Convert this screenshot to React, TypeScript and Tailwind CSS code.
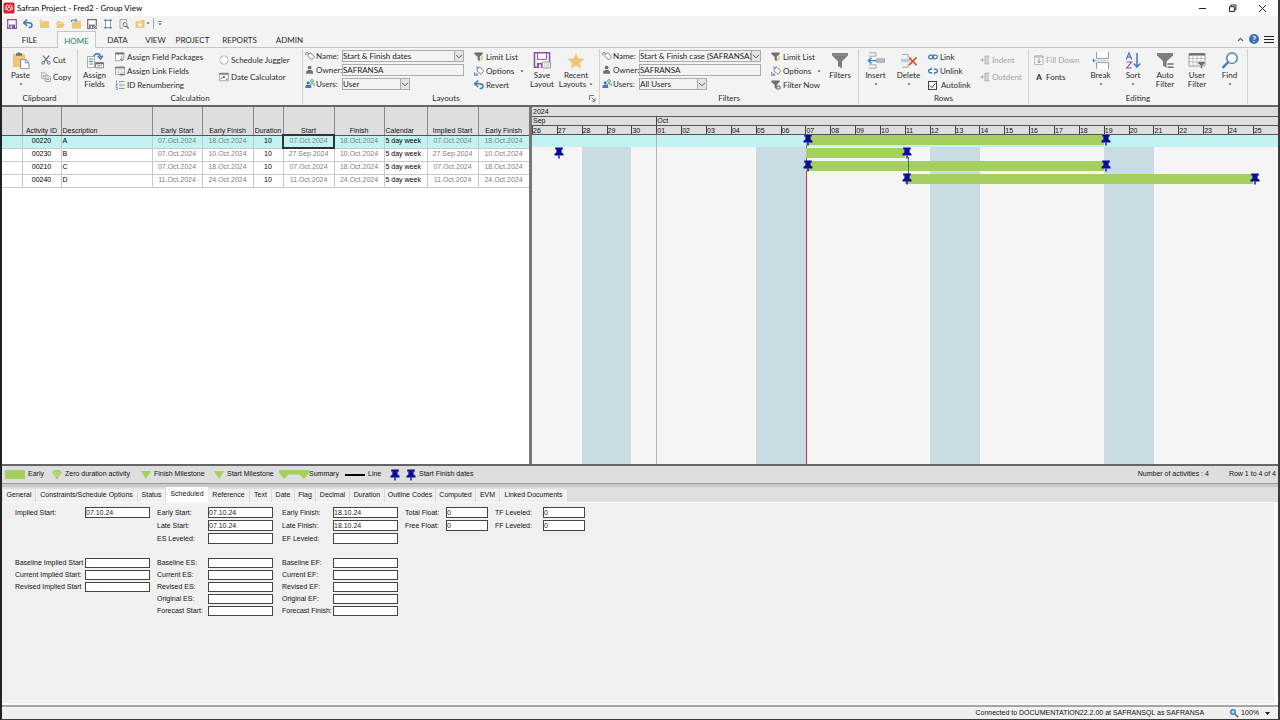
import { useState, type ReactNode } from "react";

/* ---------- Colours used by the icons ---------- */
const GRAY = "#6f6f6f";
const BLUE = "#3e7cb8";
const GOLD = "#edc677";
const PURPLE = "#8a4fa8";

/* ---------- Icon shells ---------- */
function Small({ children }: { children: ReactNode }) {
  return (
    <svg viewBox="0 0 10 10" className="h-[10px] w-[10px] shrink-0" fill="none" aria-hidden="true">
      {children}
    </svg>
  );
}

function Big({ children }: { children: ReactNode }) {
  return (
    <svg viewBox="0 0 18 17" className="h-[17px] w-[18px] shrink-0" fill="none" aria-hidden="true">
      {children}
    </svg>
  );
}

function Caret() {
  return (
    <svg viewBox="0 0 4 3" className="h-[3px] w-[4px] shrink-0" aria-hidden="true">
      <path d="M0.5 0.5h3L2 2.3z" fill="#444" />
    </svg>
  );
}

function Chevron() {
  return (
    <svg viewBox="0 0 8 5" className="h-[5px] w-[8px]" fill="none" aria-hidden="true">
      <path d="M1 0.8l3 3 3-3" stroke="#555" />
    </svg>
  );
}

/* ---------- Small icons ---------- */
const floppy = (c: string) => (
  <>
    <path d="M0.7 0.7h8.6v8.6H0.7z" stroke={c} strokeWidth="1.2" fill="#fff" />
    <path d="M2 5.6h6v3.7H2z" fill={c} />
    <path d="M3.6 6.8h1.4v2.4H3.6z" fill="#fff" />
  </>
);

const icons = {
  save: <Small>{floppy(PURPLE)}</Small>,
  saveAs: (
    <Small>
      {floppy(GRAY)}
      <path d="M6.4 9.6l3.2-3.2" stroke="#f3f3f3" strokeWidth="2.4" />
      <path d="M6.4 9.6l3.2-3.2" stroke={BLUE} strokeWidth="1.2" />
    </Small>
  ),
  undo: (
    <Small>
      <path d="M1.2 3.8h4.6c2 0 3.2 1 3.2 2.4S7.8 8.6 5.6 8.6" stroke={BLUE} strokeWidth="1.5" />
      <path d="M4.2 0.6L0.6 3.8l3.6 3.2" stroke={BLUE} strokeWidth="1.5" />
    </Small>
  ),
  folder: (
    <Small>
      <path d="M1 3.2h3.2l1-1.2H10v7H1z" fill={GOLD} />
      <path d="M2 0v4M0 2h4" stroke={GOLD} />
    </Small>
  ),
  folderOpen: (
    <Small>
      <path d="M2 2.2h3l1 1h3v1.3H3L1 8.2z" fill={GOLD} />
      <path d="M3.2 5h6.6L8 9H1z" fill={GOLD} />
    </Small>
  ),
  folderUp: (
    <Small>
      <path d="M1 3h3.2l1-1.2H10V9.5H1z" fill={GOLD} />
      <path d="M0.5 3V1.2h4.6M4 0l1.6 1.2L4 2.6" stroke={BLUE} />
    </Small>
  ),
  layout: (
    <Small>
      <path d="M2.5 0v10M7.5 0v10" stroke={GRAY} strokeWidth="0.7" />
      <path d="M1 1.3h8M1 8.7h8" stroke={BLUE} />
      <path d="M3 2h4v6H3z" fill="#fff" />
    </Small>
  ),
  preview: (
    <Small>
      <path d="M7.5 2.8V0.6H1v8.8h3" stroke="#909090" strokeWidth="0.8" />
      <circle cx="6" cy="5.6" r="2" stroke={GRAY} />
      <path d="M7.4 7L9.6 9.6" stroke={GRAY} strokeWidth="1.3" />
    </Small>
  ),
  starFolder: (
    <Small>
      <path d="M0.5 2.2h5L6.5 1H9.5v8H0.5z" fill={GOLD} />
      <path d="M5 3l.8 1.7 1.8.2-1.4 1.2.4 1.8L5 7l-1.6.9.4-1.8L2.4 4.9l1.8-.2z" fill="#fff" />
    </Small>
  ),
  cut: (
    <Small>
      <path d="M2 0.5l4.8 6.2M8.2 0.5L3.2 6.7" stroke={GRAY} strokeWidth="1.2" />
      <circle cx="2.2" cy="7.8" r="1.4" stroke={BLUE} />
      <circle cx="7.8" cy="7.8" r="1.4" stroke={BLUE} />
    </Small>
  ),
  copy: (
    <Small>
      <path d="M0.6 0.6h3l1.6 1.6v4.4H0.6z" fill="#fff" stroke="#999" strokeWidth="0.8" />
      <path d="M4.2 3.4h3.2l2 1.8v4.2H4.2z" fill="#fff" stroke="#888" strokeWidth="0.8" />
      <path d="M5.3 6h2.8M5.3 7.6h2.8M1.6 3h2M1.6 4.6h2" stroke={BLUE} strokeWidth="0.8" />
    </Small>
  ),
  packages: (
    <Small>
      <path d="M0.6 0.8h8.3v6M0.6 0.8v8h5" stroke="#8c8c8c" strokeWidth="0.8" fill="#fff" />
      <path d="M0.6 1.6h8.3" stroke={GRAY} strokeWidth="1.8" />
      <path d="M6.8 4.5v3.8M5 7l1.8 2L8.6 7" stroke="#4f9d6b" />
    </Small>
  ),
  linkFields: (
    <Small>
      <path d="M0.5 1h9v7.4h-9z" stroke="#8c8c8c" strokeWidth="0.8" fill="#fff" />
      <path d="M0.5 1.6h9" stroke={GRAY} strokeWidth="1.5" />
      <path d="M3.5 1v7.4M6.5 1v7.4M0.5 4h9M0.5 6.2h9" stroke="#b5b5b5" strokeWidth="0.5" />
      <path d="M4.5 8.6h5" stroke={BLUE} strokeWidth="1.6" />
    </Small>
  ),
  renumber: (
    <Small>
      <path d="M1.5 0.5v2.2M0.7 4h1.6L0.9 6h1.5M0.8 7.5h1.5v2H0.8" stroke={BLUE} strokeWidth="0.8" />
      <path d="M3.8 1.6h5.7M3.8 5h5.7M3.8 8.4h5.7" stroke="#8f8f8f" />
    </Small>
  ),
  juggler: (
    <Small>
      <circle cx="5" cy="5" r="4.2" stroke="#7fa9cc" strokeWidth="0.9" strokeDasharray="5.6 1" fill="#fff" />
    </Small>
  ),
  dateCalc: (
    <Small>
      <path d="M0.6 1.2h8.8v7.6H0.6z" stroke="#8c8c8c" strokeWidth="0.8" fill="#fff" />
      <path d="M0.6 2h8.8" stroke={GRAY} strokeWidth="1.4" />
      <path d="M3.8 4h2v2h-2z" fill="#cf3b2c" />
      <path d="M1.8 5.6h1.4v1.4H1.8zM7 6.6h1.4V8H7z" fill="#4f9d6b" />
    </Small>
  ),
  tag: (
    <Small>
      <path d="M3 2.6l3-.6 3.4 3.8-2.6 3-3.8-3.4z" stroke="#777" strokeWidth="0.9" fill="#fff" />
      <path d="M0.8 4.2V2.2L2.2 1.2l1.6 1.6" stroke={GRAY} strokeWidth="0.9" />
    </Small>
  ),
  owner: (
    <Small>
      <circle cx="4.6" cy="2.6" r="1.9" fill={GRAY} />
      <path d="M1.2 8.8V6.2l2-1.2h2.8l2 1.2v2.6z" fill={GRAY} />
    </Small>
  ),
  users: (
    <Small>
      <circle cx="7" cy="2" r="1.4" stroke="#4f9d6b" strokeWidth="0.9" />
      <path d="M5.6 6.6V4.8h3.6v2.4" stroke="#4f9d6b" strokeWidth="0.9" />
      <circle cx="3.2" cy="3.8" r="1.6" fill={BLUE} />
      <path d="M0.4 9V6.8l1.6-1h2.6l1.6 1V9z" fill={BLUE} />
    </Small>
  ),
  limit: (
    <Small>
      <path d="M0.3 0.5h8.4v1.4L5.8 4.8v4.4L3.6 7.8v-3L0.3 1.9z" fill={GRAY} />
      <path d="M8.4 4L5.6 7.2h1.6L6.2 10l3.4-3.6H8L9.4 4z" fill={GOLD} />
    </Small>
  ),
  filterNow: (
    <Small>
      <path d="M0.3 0.5h8.4v1.4L5.8 4.8v4.4L3.6 7.8v-3L0.3 1.9z" fill={GRAY} />
      <circle cx="7.4" cy="7.6" r="1.7" fill="#f3f3f3" stroke={GRAY} strokeWidth="1.1" />
    </Small>
  ),
  options: (
    <Small>
      <path d="M3.2 1.6l2.8-.6 3.6 4-2.6 3.4-4-3.6z" stroke="#777" strokeWidth="0.9" fill="#fff" />
      <path d="M2.2 0.5l2.6 2.4" stroke={GRAY} strokeWidth="0.9" />
      <path d="M0.8 6v3M3 7v2M0 9.2h4.2" stroke={BLUE} strokeWidth="0.9" />
    </Small>
  ),
  link: (
    <Small>
      <rect x="0.7" y="3.2" width="4.8" height="3.6" rx="1.8" stroke={BLUE} strokeWidth="1.3" />
      <rect x="4.5" y="3.2" width="4.8" height="3.6" rx="1.8" stroke={BLUE} strokeWidth="1.3" />
    </Small>
  ),
  unlink: (
    <Small>
      <path d="M4 3.2H2.4a1.8 1.8 0 000 3.6H4M6 3.2h1.6a1.8 1.8 0 010 3.6H6" stroke={BLUE} strokeWidth="1.4" />
      <path d="M3.4 1.2l.8 1M6.6 8.8l-.8-1" stroke={BLUE} strokeWidth="0.9" />
    </Small>
  ),
  indent: (
    <Small>
      <path d="M0 5h4M2.4 3.2v3.6M4.8 1.2h4.8M5 1.2v7.6M5 5h4M4.8 8.8h4.8M6 3h3M6 7h3" stroke="#a5a5a5" strokeWidth="0.9" />
    </Small>
  ),
  fillDown: (
    <Small>
      <path d="M0.8 0.8h8.2v8.6H0.8z" stroke="#aaa" strokeWidth="0.9" fill="#fff" />
      <path d="M0.8 2h8.2" stroke="#aaa" strokeWidth="1.2" />
      <path d="M5 3.4v4.4M3.2 6L5 7.8 6.8 6" stroke="#8a8a8a" />
    </Small>
  ),
};

/* ---------- Large ribbon icons ---------- */
const bigIcons = {
  paste: (
    <Big>
      <path d="M1 2h12v13H1z" fill={GOLD} />
      <path d="M4 2.5V1.2h1.6L7 0l1.4 1.2H10v2.6H4z" fill={GRAY} />
      <path d="M8.5 7.5h5l3.5 3.2v6H8.5z" fill="#fff" stroke="#8c8c8c" />
      <path d="M13.3 7.5v3.3H17" stroke="#8c8c8c" />
    </Big>
  ),
  assign: (
    <Big>
      <path d="M1.5 4.5h7v11h-7z" fill="#fff" stroke="#a0a0a0" strokeWidth="0.9" />
      <path d="M3 7h4M3 9.5h4M3 12h4" stroke={BLUE} />
      <path d="M9.5 10.5h8v5.3h-8z" fill="#fff" stroke="#8c8c8c" />
      <path d="M9.5 11.5h8" stroke={GRAY} strokeWidth="1.6" />
      <path d="M11 13.8h5" stroke="#999" />
      <path d="M8 4.2C9 0.8 14 0.6 14.6 5M11.8 4l2.8 3 2.4-3.4" stroke={BLUE} strokeWidth="1.5" />
    </Big>
  ),
  saveLayout: (
    <Big>
      <path d="M1.5 0.8h15v14.4h-15z" fill="#fff" stroke={PURPLE} strokeWidth="1.6" />
      <path d="M4.5 1h9v6.4h-9z" fill="#fff" stroke={PURPLE} />
      <path d="M4 11h8v4.6H4z" fill={PURPLE} />
      <path d="M6 12.4h2v3H6z" fill="#fff" />
      <path d="M9.5 10h8v6h-8z" fill="#fff" stroke="#999" />
      <path d="M11 12h1.4M13.2 12h3M11 14h1.4M13.2 14h3" stroke="#999" strokeWidth="0.8" />
    </Big>
  ),
  star: (
    <Big>
      <path d="M9 0.8l2.3 5.5 6 .5-4.5 3.9 1.4 5.8L9 13.4l-5.2 3.1 1.4-5.8L.7 6.8l6-.5z" fill={GOLD} />
    </Big>
  ),
  filter: (
    <Big>
      <path d="M1 1h16v2.4l-6 5.8v7.3l-4-2.4V9.2L1 3.4z" fill="#7d7d7d" />
      <path d="M1.8 3h14.4" stroke="#a5a5a5" strokeWidth="0.6" />
    </Big>
  ),
  insert: (
    <Big>
      <path d="M2 0.8h7v3.4H2M2 12.8h7v3.4H2" stroke="#a8a8a8" />
      <path d="M9.5 6.8h8v3.6h-8z" fill="#a8c4dd" stroke="#9a9a9a" strokeWidth="0.7" />
      <path d="M1.6 8.6h7.4M4.4 5.8L1.4 8.6l3 2.8" stroke={BLUE} strokeWidth="1.4" />
    </Big>
  ),
  remove: (
    <Big>
      <path d="M2 2.4h6v3M2 15.2h6v-3" stroke="#a8a8a8" />
      <path d="M1 6.8h9v3.6H1z" fill="#b7cfe4" />
      <path d="M9 5.4l7.6 7.8M16.6 5.4L9 13.2" stroke="#d9532c" strokeWidth="1.7" />
    </Big>
  ),
  pageBreak: (
    <Big>
      <path d="M4.5 0v6.4h12V0M4.5 17v-6.4h12V17" fill="#fff" stroke="#999" />
      <path d="M2.8 8.5h14" stroke="#a8c4dd" strokeWidth="0.8" />
      <path d="M0.8 6.4l2.8 2.1-2.8 2.1z" fill={BLUE} />
    </Big>
  ),
  sort: (
    <Big>
      <path d="M2.2 7.4L5 0.8l2.8 6.6M3.2 5.2h3.6" stroke={BLUE} strokeWidth="1.2" />
      <path d="M2.6 10h5L2.8 16h5" stroke={PURPLE} strokeWidth="1.2" />
      <path d="M13 1v14M9.8 11.6l3.2 3.6 3.2-3.6" stroke={BLUE} strokeWidth="1.5" />
    </Big>
  ),
  autoFilter: (
    <Big>
      <path d="M1 1h16v2.4l-6 5.6v7l-4-2.2V9L1 3.4z" fill="#7d7d7d" />
      <path d="M10.5 9.5H18V17h-7.5z" fill="#f3f3f3" />
      <path d="M11.5 12h6M11.5 15.2h6" stroke={GRAY} strokeWidth="1.6" />
    </Big>
  ),
  userFilter: (
    <Big>
      <path d="M1 1.5h16v12.5H1z" fill="#fff" stroke="#9a9a9a" />
      <path d="M1 2.4h16" stroke={GRAY} strokeWidth="2.4" />
      <path d="M5 3v11M9 3v11M13 3v11M1 6.5h16M1 10h16" stroke="#b0b0b0" strokeWidth="0.8" />
      <path d="M9.5 9.5h8v1.4l-2.8 2.6V17l-2.4-1.2v-2.3l-2.8-2.6z" fill={GRAY} stroke="#f3f3f3" strokeWidth="0.6" />
    </Big>
  ),
  find: (
    <Big>
      <circle cx="11" cy="6.2" r="5.2" fill="#fff" stroke={BLUE} strokeWidth="1.4" />
      <path d="M7.2 10L1.6 15.8" stroke={BLUE} strokeWidth="2.4" />
    </Big>
  ),
};

function Pin() {
  return (
    <svg viewBox="0 0 10 12" className="h-[12px] w-[10px] shrink-0" aria-hidden="true">
      <path d="M1.2 0.6h7.6v1.8H7.6v3.1l1.9 1.3v1.8H0.5V6.8l1.9-1.3V2.4H1.2z" fill="#0b0b9c" />
      <path d="M4.3 8.4h1.4V11.6H4.3z" fill="#0b0b9c" />
    </svg>
  );
}

/* ---------- Ribbon building blocks ---------- */
function Group({ label, width, children, launcher }: { label: string; width: string; children: ReactNode; launcher?: boolean }) {
  return (
    <section className={`flex shrink-0 flex-col border-r border-[#d2d2d2] ${width}`} aria-label={label}>
      <div className="flex h-[44px] items-start">{children}</div>
      <div className="flex h-[11px] items-center">
        <span className="flex-1 text-center leading-[11px]">{label}</span>
        {launcher && (
          <button aria-label="More layout settings" className="mr-[3px]">
            <svg viewBox="0 0 7 7" className="h-[7px] w-[7px]" fill="none">
              <path d="M0.5 5V0.5H5" stroke="#777" />
              <path d="M2.6 2.6l3 3M6 3v3.2H2.8" stroke="#777" />
            </svg>
          </button>
        )}
      </div>
    </section>
  );
}

function BigButton({ icon, lines, width, caret }: { icon: ReactNode; lines: string[]; width: string; caret?: boolean }) {
  return (
    <button className={`flex shrink-0 flex-col items-center pt-[3px] ${width}`}>
      {icon}
      <span className="mt-[2px] leading-[9px]">{lines[0]}</span>
      {lines[1] && (
        <span className="flex items-center gap-[3px] leading-[9px] whitespace-nowrap">
          {lines[1]}
          {caret && <Caret />}
        </span>
      )}
      {!lines[1] && caret && (
        <span className="pt-[3px]">
          <Caret />
        </span>
      )}
    </button>
  );
}

function Item({ icon, text, disabled, caret }: { icon: ReactNode; text: string; disabled?: boolean; caret?: boolean }) {
  return (
    <button disabled={disabled} className="flex h-[14px] items-center gap-[2px] whitespace-nowrap disabled:text-[#a3a3a3]">
      {icon}
      <span>{text}</span>
      {caret && (
        <span className="pl-[4px]">
          <Caret />
        </span>
      )}
    </button>
  );
}

function Combo({ id, value, width }: { id: string; value: string; width: string }) {
  return (
    <div className={`relative h-[12px] ${width}`}>
      <select id={id} className="block h-full w-full appearance-none border border-[#ababab] bg-[#f3f3f3] text-[8px] leading-[9px] text-[#222]">
        <option>{value}</option>
      </select>
      <span className="pointer-events-none absolute inset-y-0 right-0 flex w-[10px] items-center justify-center border border-[#ababab] bg-[#e4e4e4]">
        <Chevron />
      </span>
    </div>
  );
}

function NameOwnerUsers({ prefix, name, users, usersWidth }: { prefix: string; name: string; users: string; usersWidth: string }) {
  return (
    <div className="flex shrink-0 flex-col pl-[2px]">
      <div className="flex h-[14px] items-center">
        {icons.tag}
        <label htmlFor={`${prefix}-name`} className="w-[27px] pl-[1px]">Name:</label>
        <Combo id={`${prefix}-name`} value={name} width="w-[122px]" />
      </div>
      <div className="flex h-[14px] items-center">
        {icons.owner}
        <label htmlFor={`${prefix}-owner`} className="w-[27px] pl-[1px]">Owner:</label>
        <input id={`${prefix}-owner`} defaultValue="SAFRANSA" className="h-[12px] w-[122px] border border-[#ababab] bg-[#f3f3f3] text-[#222]" />
      </div>
      <div className="flex h-[14px] items-center">
        {icons.users}
        <label htmlFor={`${prefix}-users`} className="w-[27px] pl-[1px]">Users:</label>
        <Combo id={`${prefix}-users`} value={users} width={usersWidth} />
      </div>
    </div>
  );
}

/* ---------- Title bar and tabs ---------- */
function TitleBar() {
  return (
    <header className="flex h-[16px] shrink-0 items-center bg-white pl-[1px] text-[8px] text-black">
      <svg viewBox="0 0 12 12" className="h-[12px] w-[12px]" fill="none" aria-hidden="true">
        <rect x="0.5" y="0.5" width="11" height="11" rx="1.5" fill="#d8202f" />
        <path d="M3 5.4V3.8L4.6 3l1.4.8L7.4 3l1.6.8v1.6L7.6 6.2 6 5.4l-1.6.8zM4.4 6.2v1.6L6 8.9l1.6-1.1V6.2M6 3.8v1.6M3 5.4l-.6 1.8 2 .6M9 5.4l.6 1.8-2 .6" stroke="#fff" strokeWidth="0.8" />
      </svg>
      <h1 className="pl-[2px]">Safran Project - Fred2 - Group View</h1>
      <div className="ml-auto flex items-center gap-[21px] pr-[11px]">
        <button aria-label="Minimize" className="h-[9px] w-[9px]">
          <svg viewBox="0 0 9 9" fill="none"><path d="M1 4.5h7" stroke="#222" /></svg>
        </button>
        <button aria-label="Restore" className="h-[9px] w-[9px]">
          <svg viewBox="0 0 9 9" fill="none"><path d="M1.5 2.7h4.8v4.8H1.5zM3 2.5V1h4.9v4.9H6.5" stroke="#222" /></svg>
        </button>
        <button aria-label="Close" className="h-[9px] w-[9px]">
          <svg viewBox="0 0 9 9" fill="none"><path d="M1 1l7 7M8 1L1 8" stroke="#222" /></svg>
        </button>
      </div>
    </header>
  );
}

const quickTools: [string, ReactNode][] = [
  ["Save", icons.save],
  ["Undo", icons.undo],
  ["New", icons.folder],
  ["Open", icons.folderOpen],
  ["Reopen", icons.folderUp],
  ["Save as", icons.saveAs],
  ["Page layout", icons.layout],
  ["Preview", icons.preview],
  ["Favorites", icons.starFolder],
];

function QuickAccess() {
  return (
    <div className="flex h-[15px] shrink-0 items-center gap-[6px] pl-[5px]">
      {quickTools.map(([name, icon]) => (
        <button key={name} aria-label={name}>{icon}</button>
      ))}
      <span className="-ml-[5px]"><Caret /></span>
      <span className="-ml-[3px] h-[11px] w-px bg-[#aaa]" />
      <button aria-label="Customize toolbar" className="-ml-[2px] border-t border-[#888] pt-[1px]"><Caret /></button>
    </div>
  );
}

const ribbonTabs: [string, string][] = [
  ["FILE", "w-[55px]"],
  ["HOME", "w-[39px]"],
  ["DATA", "w-[43px]"],
  ["VIEW", "w-[33px]"],
  ["PROJECT", "w-[41px]"],
  ["REPORTS", "w-[53px]"],
  ["ADMIN", "w-[47px]"],
];

function RibbonTabs() {
  return (
    <nav className="flex h-[17px] shrink-0 text-[8px]">
      {ribbonTabs.map(([name, width]) => (
        <button
          key={name}
          className={
            name === "HOME"
              ? `${width} border border-b-0 border-[#c6c6c6] bg-[#f7f7f7] pt-[1px] text-[#2c7d57]`
              : `${width} border-b border-[#c6c6c6] pt-[2px]`
          }
        >
          {name}
        </button>
      ))}
      <div className="flex flex-1 items-center justify-end gap-[5px] border-b border-[#c6c6c6] pr-[4px]">
        <button aria-label="Collapse ribbon">
          <svg viewBox="0 0 7 5" className="h-[5px] w-[7px]" fill="none"><path d="M1 4l2.5-2.6L6 4" stroke="#666" strokeWidth="1.2" /></svg>
        </button>
        <button aria-label="Help" className="h-[10px] w-[10px] rounded-full bg-[#3a70b0] text-[8px] leading-[10px] font-bold text-white">?</button>
        <button aria-label="Menu" className="flex w-[10px] flex-col gap-[2px]">
          <span className="h-px bg-[#222]" />
          <span className="h-px bg-[#222]" />
          <span className="h-px bg-[#222]" />
        </button>
      </div>
    </nav>
  );
}

function Ribbon() {
  return (
    <div className="flex h-[57px] shrink-0 bg-[#f3f3f3] py-[1px] text-[8px]">
      <Group label="Clipboard" width="w-[76px]">
        <BigButton icon={bigIcons.paste} lines={["Paste"]} width="w-[37px]" caret />
        <div className="flex flex-col gap-[3px] pt-[4px] pl-[2px]">
          <Item icon={icons.cut} text="Cut" />
          <Item icon={icons.copy} text="Copy" />
        </div>
      </Group>

      <Group label="Calculation" width="w-[225px]">
        <BigButton icon={bigIcons.assign} lines={["Assign", "Fields"]} width="w-[33px]" />
        <div className="flex w-[108px] flex-col pt-[1px] pl-[4px]">
          <Item icon={icons.packages} text="Assign Field Packages" />
          <Item icon={icons.linkFields} text="Assign Link Fields" />
          <Item icon={icons.renumber} text="ID Renumbering" />
        </div>
        <div className="flex flex-col gap-[3px] pt-[4px]">
          <Item icon={icons.juggler} text="Schedule Juggler" />
          <Item icon={icons.dateCalc} text="Date Calculator" />
        </div>
      </Group>

      <Group label="Layouts" width="w-[297px]" launcher>
        <NameOwnerUsers prefix="layout" name="Start & Finish dates" users="User" usersWidth="w-[68px]" />
        <div className="flex w-[62px] flex-col pt-[1px] pl-[10px]">
          <Item icon={icons.limit} text="Limit List" />
          <Item icon={icons.options} text="Options" caret />
          <Item icon={icons.undo} text="Revert" />
        </div>
        <BigButton icon={bigIcons.saveLayout} lines={["Save", "Layout"]} width="w-[32px]" />
        <BigButton icon={bigIcons.star} lines={["Recent", "Layouts"]} width="w-[36px]" caret />
      </Group>

      <Group label="Filters" width="w-[259px]">
        <NameOwnerUsers prefix="filter" name="Start & Finish case (SAFRANSA)" users="All Users" usersWidth="w-[68px]" />
        <div className="flex w-[62px] flex-col pt-[1px] pl-[10px]">
          <Item icon={icons.limit} text="Limit List" />
          <Item icon={icons.options} text="Options" caret />
          <Item icon={icons.filterNow} text="Filter Now" />
        </div>
        <BigButton icon={bigIcons.filter} lines={["Filters"]} width="w-[36px]" />
      </Group>

      <Group label="Rows" width="w-[170px]">
        <BigButton icon={bigIcons.insert} lines={["Insert"]} width="w-[33px]" caret />
        <BigButton icon={bigIcons.remove} lines={["Delete"]} width="w-[33px]" caret />
        <div className="flex w-[55px] flex-col pt-[1px] pl-[3px]">
          <Item icon={icons.link} text="Link" />
          <Item icon={icons.unlink} text="Unlink" />
          <label className="flex h-[14px] items-center gap-[4px]">
            <input
              type="checkbox"
              defaultChecked
              className="peer h-[9px] w-[9px] appearance-none border border-[#444] bg-white"
            />
            <svg viewBox="0 0 9 9" className="-ml-[13px] hidden h-[9px] w-[9px] peer-checked:block" fill="none">
              <path d="M2 4.5l2 2 3.2-4" stroke="#333" />
            </svg>
            <span>Autolink</span>
          </label>
        </div>
        <div className="flex flex-col gap-[3px] pt-[4px]">
          <Item icon={icons.indent} text="Indent" disabled />
          <Item icon={icons.indent} text="Outdent" disabled />
        </div>
      </Group>

      <Group label="Editing" width="w-[219px]">
        <div className="flex w-[55px] flex-col gap-[3px] pt-[4px] pl-[5px]">
          <Item icon={icons.fillDown} text="Fill Down" disabled />
          <Item icon={<span className="w-[10px] text-center font-bold">A</span>} text="Fonts" />
        </div>
        <BigButton icon={bigIcons.pageBreak} lines={["Break"]} width="w-[33px]" caret />
        <BigButton icon={bigIcons.sort} lines={["Sort"]} width="w-[32px]" caret />
        <BigButton icon={bigIcons.autoFilter} lines={["Auto", "Filter"]} width="w-[32px]" />
        <BigButton icon={bigIcons.userFilter} lines={["User", "Filter"]} width="w-[32px]" />
        <BigButton icon={bigIcons.find} lines={["Find"]} width="w-[33px]" caret />
      </Group>
    </div>
  );
}

/* ---------- Activity table ---------- */
const columns = [
  { title: "", width: "w-[20px]", align: "text-center" },
  { title: "Activity ID", width: "w-[39px]", align: "text-center" },
  { title: "Description", width: "w-[91px]", align: "text-left" },
  { title: "Early Start", width: "w-[50px]", align: "text-center" },
  { title: "Early Finish", width: "w-[51px]", align: "text-center" },
  { title: "Duration", width: "w-[30px]", align: "text-center" },
  { title: "Start", width: "w-[51px]", align: "text-center" },
  { title: "Finish", width: "w-[50px]", align: "text-center" },
  { title: "Calendar", width: "w-[43px]", align: "text-left" },
  { title: "Implied Start", width: "w-[51px]", align: "text-center" },
  { title: "Early Finish", width: "w-[51px]", align: "text-center" },
];

const rows = [
  ["", "00220", "A", "07.Oct.2024", "18.Oct.2024", "10", "07.Oct.2024", "18.Oct.2024", "5 day week", "07.Oct.2024", "18.Oct.2024"],
  ["", "00230", "B", "07.Oct.2024", "10.Oct.2024", "10", "27.Sep.2024", "10.Oct.2024", "5 day week", "27.Sep.2024", "10.Oct.2024"],
  ["", "00210", "C", "07.Oct.2024", "18.Oct.2024", "10", "07.Oct.2024", "18.Oct.2024", "5 day week", "07.Oct.2024", "18.Oct.2024"],
  ["", "00240", "D", "11.Oct.2024", "24.Oct.2024", "10", "11.Oct.2024", "24.Oct.2024", "5 day week", "11.Oct.2024", "24.Oct.2024"],
];

function ActivityTable() {
  const [selected, setSelected] = useState(0);
  return (
    <div className="w-[527px] shrink-0 bg-white">
      <table className="w-full table-fixed border-collapse">
        <thead>
          <tr className="h-[28px] bg-[#dedede]">
            {columns.map((c, i) => (
              <th key={i} className={`border-r border-b border-[#8a8a8a] border-b-[#555] px-[1px] align-bottom leading-[8px] font-normal whitespace-nowrap ${c.width} ${c.align}`}>
                {c.title}
              </th>
            ))}
          </tr>
        </thead>
        <tbody>
          {rows.map((row, r) => (
            <tr key={row[1]} onClick={() => setSelected(r)} className={r === selected ? "h-[13px] bg-[#c3f2f2]" : "h-[13px]"}>
              {row.map((cell, i) => (
                <td
                  key={i}
                  className={`border-r border-b border-[#c9c9c9] px-[1px] align-top leading-[10px] whitespace-nowrap ${columns[i].align} ${
                    cell.includes(".") ? "text-[#808080]" : "text-black"
                  } ${r === 0 && i === 6 ? "outline-2 -outline-offset-1 outline-[#333]" : ""}`}
                >
                  {cell}
                </td>
              ))}
            </tr>
          ))}
        </tbody>
      </table>
    </div>
  );
}

/* ---------- Gantt chart: day 0 is 26 September, 30 days are shown ---------- */
const DAYS = 30;
const dayLabels = Array.from({ length: DAYS }, (_, i) => String(i < 5 ? 26 + i : i - 4).padStart(2, "0"));
const weekends = [2, 9, 16, 23];
const pct = (day: number) => `${(day / DAYS) * 100}%`;

const bars = [
  { from: 11, to: 23, pins: [11, 23] },
  { from: 11, to: 15, pins: [1, 15] },
  { from: 11, to: 23, pins: [11, 23] },
  { from: 15, to: 29, pins: [15, 29] },
];

function Gantt() {
  return (
    <div className="flex min-w-0 flex-1 flex-col bg-[#f5f5f5]">
      <div className="shrink-0 bg-[#dedede]">
        <div className="h-[10px] border-b border-[#555] pl-[1px] leading-[9px]">2024</div>
        <div className="flex h-[9px] border-b border-[#555] leading-[8px]">
          <div className="pl-[1px]" style={{ width: pct(5) }}>Sep</div>
          <div className="border-l border-[#444]">Oct</div>
        </div>
        <div className="flex h-[9px] border-b border-[#555] leading-[9px]">
          {dayLabels.map((d, i) => (
            <div key={i} className="min-w-0 flex-1 border-l border-[#444]">{d}</div>
          ))}
        </div>
      </div>
      <div className="relative flex-1 overflow-hidden">
        {weekends.map((d) => (
          <div key={d} className="absolute inset-y-0 bg-[#c9dce3]" style={{ left: pct(d), width: pct(2) }} />
        ))}
        <div className="absolute inset-x-0 top-0 h-[12px] bg-[#c3f2f2]" />
        <div className="absolute inset-y-0 w-px bg-[#b5b5b5]" style={{ left: pct(5) }} />
        <div className="absolute inset-y-0 w-px bg-[#b04848]" style={{ left: pct(11) }} />
        <div className="absolute inset-x-0 top-0">
          {bars.map((b, i) => (
            <div key={i} className="relative h-[13px]">
              <div className="absolute top-0 h-[10px] bg-[#a5d05f]" style={{ left: pct(b.from), width: pct(b.to - b.from) }} />
            </div>
          ))}
        </div>
        <div className="absolute top-[22px] ml-[3px] h-[18px] w-px bg-[#3f7a5a]" style={{ left: pct(15) }} />
        <div className="absolute inset-x-0 top-0">
          {bars.map((b, i) => (
            <div key={i} className="relative h-[13px]">
              {b.pins.map((p) => (
                <span key={p} className="absolute -top-px -ml-[3px]" style={{ left: pct(p) }}>
                  <Pin />
                </span>
              ))}
            </div>
          ))}
        </div>
      </div>
    </div>
  );
}

/* ---------- Legend ---------- */
function Triangle() {
  return (
    <svg viewBox="0 0 10 8" className="h-[8px] w-[10px]" aria-hidden="true">
      <path d="M0 0h10L5 8z" fill="#a5d05f" />
    </svg>
  );
}

function Legend() {
  return (
    <div className="flex h-[18px] shrink-0 items-center border-b border-[#9a9a9a] bg-[#dedede] pr-[2px] pl-[3px] whitespace-nowrap">
      <span className="h-[9px] w-[20px] bg-[#a5d05f]" />
      <span className="w-[27px] pl-[3px]">Early</span>
      <svg viewBox="0 0 10 9" className="h-[9px] w-[10px]" aria-hidden="true">
        <path d="M2.6 0h4.8L10 2.6 7 6 6 9H4L3 6 0 2.6z" fill="#a5d05f" />
        <path d="M2 2.4h6L5 6.4z" fill="none" stroke="#c4dea0" strokeWidth="0.8" />
      </svg>
      <span className="w-[79px] pl-[3px]">Zero duration activity</span>
      <Triangle />
      <span className="w-[63px] pl-[3px]">Finish Milestone</span>
      <Triangle />
      <span className="w-[55px] pl-[3px]">Start Milestone</span>
      <svg viewBox="0 0 30 9" className="h-[9px] w-[30px]" aria-hidden="true">
        <path d="M0 0h30v3l-5 6-5-4.4H10L5 9 0 3z" fill="#a5d05f" />
      </svg>
      <span className="w-[36px]">Summary</span>
      <span className="h-[2px] w-[20px] bg-black" />
      <span className="w-[25px] pl-[3px]">Line</span>
      <Pin />
      <span className="w-[6px]" />
      <Pin />
      <span className="pl-[3px]">Start Finish dates</span>
      <span className="ml-auto">Number of activities : 4</span>
      <span className="pl-[20px]">Row 1 to 4 of 4</span>
    </div>
  );
}

/* ---------- Detail tabs and form ---------- */
const detailTabs: [string, string][] = [
  ["General", "w-[33px]"],
  ["Constraints/Schedule Options", "w-[102px]"],
  ["Status", "w-[28px]"],
  ["Scheduled", "w-[42px]"],
  ["Reference", "w-[42px]"],
  ["Text", "w-[22px]"],
  ["Date", "w-[23px]"],
  ["Flag", "w-[21px]"],
  ["Decimal", "w-[34px]"],
  ["Duration", "w-[35px]"],
  ["Outline Codes", "w-[51px]"],
  ["Computed", "w-[40px]"],
  ["EVM", "w-[24px]"],
  ["Linked Documents", "w-[68px]"],
];

function DetailTabs() {
  const [active, setActive] = useState("Scheduled");
  return (
    <div role="tablist" className="flex h-[15px] shrink-0 items-end bg-[#dfdfdf] pl-[1px]">
      {detailTabs.map(([name, width]) => (
        <button
          key={name}
          role="tab"
          aria-selected={name === active}
          onClick={() => setActive(name)}
          className={`shrink-0 whitespace-nowrap ${width} ${
            name === active ? "h-[15px] bg-white pb-[1px]" : "h-[13px] border-r border-[#dadada] bg-[#f0f0f0]"
          }`}
        >
          {name}
        </button>
      ))}
    </div>
  );
}

type FieldDef = [label: string, value: string];

function Fields({ items, height, columns: cols }: { items: FieldDef[]; height: string; columns: string }) {
  return (
    <div className="flex flex-col gap-[2px]">
      {items.map(([label, value]) => {
        const id = label.toLowerCase().replace(/[^a-z]+/g, "-");
        return (
          <div key={label} className={`grid items-center leading-[10px] ${cols}`}>
            <label htmlFor={id} className="whitespace-nowrap">{label}</label>
            <input id={id} defaultValue={value} className={`w-full border border-[#444] bg-white text-[#222] ${height}`} />
          </div>
        );
      })}
    </div>
  );
}

function ScheduledForm() {
  const top = { height: "h-[11px]" };
  const low = { height: "h-[10px]" };
  return (
    <div className="flex flex-1 flex-col gap-[14px] border-t border-r-4 border-b-2 border-[#fafafa] bg-[#f0f0f0] pt-[4px] pl-[13px]">
      <div className="flex items-start">
        <div className="mr-[7px]">
          <Fields {...top} columns="grid-cols-[70px_65px]" items={[["Implied Start:", "07.10.24"]]} />
        </div>
        <div className="mr-[9px]">
          <Fields {...top} columns="grid-cols-[51px_65px]" items={[["Early Start:", "07.10.24"], ["Late Start:", "07.10.24"], ["ES Leveled:", ""]]} />
        </div>
        <div className="mr-[7px]">
          <Fields {...top} columns="grid-cols-[51px_65px]" items={[["Early Finish:", "18.10.24"], ["Late Finish:", "18.10.24"], ["EF Leveled:", ""]]} />
        </div>
        <div className="mr-[7px]">
          <Fields {...top} columns="grid-cols-[41px_42px]" items={[["Total Float:", "0"], ["Free Float:", "0"]]} />
        </div>
        <Fields {...top} columns="grid-cols-[48px_42px]" items={[["TF Leveled:", "0"], ["FF Leveled:", "0"]]} />
      </div>
      <div className="flex items-start">
        <div className="mr-[7px]">
          <Fields {...low} columns="grid-cols-[70px_65px]" items={[["Baseline Implied Start", ""], ["Current Implied Start:", ""], ["Revised Implied Start", ""]]} />
        </div>
        <div className="mr-[9px]">
          <Fields {...low} columns="grid-cols-[51px_65px]" items={[["Baseline ES:", ""], ["Current ES:", ""], ["Revised ES:", ""], ["Original ES:", ""], ["Forecast Start:", ""]]} />
        </div>
        <Fields {...low} columns="grid-cols-[51px_65px]" items={[["Baseline EF:", ""], ["Current EF:", ""], ["Revised EF:", ""], ["Original EF:", ""], ["Forecast Finish:", ""]]} />
      </div>
    </div>
  );
}

function StatusBar() {
  return (
    <footer className="flex h-[14px] shrink-0 items-center justify-end border-t-2 border-[#a5a5a5] bg-[#f0f0f0] pr-[8px]">
      <span className="pr-[25px]">Connected to DOCUMENTATION22.2.00 at SAFRANSQL as SAFRANSA</span>
      <button className="flex items-center gap-[2px]">
        <Small>
          <circle cx="4" cy="4" r="3" fill="#2f7fd6" />
          <path d="M4 2.4v3.2M2.4 4h3.2" stroke="#fff" />
          <path d="M6.2 6.2l3 3" stroke="#8a5a2b" strokeWidth="1.5" />
        </Small>
        100%
        <svg viewBox="0 0 5 3" className="ml-[4px] h-[3px] w-[5px]" aria-hidden="true"><path d="M0 0h5L2.5 3z" fill="#222" /></svg>
      </button>
    </footer>
  );
}

export default function App() {
  return (
    <div className="flex h-screen flex-col overflow-hidden border-r-2 border-b border-l-2 border-[#3a3a3a] border-l-[#222] bg-[#f3f3f3] font-[Lato,'Open_Sans',sans-serif] text-[#2b2b2b]">
      <TitleBar />
      <QuickAccess />
      <RibbonTabs />
      <Ribbon />
      <main className="flex min-h-0 flex-1 flex-col font-['Liberation_Sans',Arial,sans-serif] text-[7px] text-[#111]">
        <div className="flex h-[360px] min-h-0 flex-auto border-y-2 border-[#666]">
          <ActivityTable />
          <div className="w-[3px] shrink-0 bg-[#777]" />
          <Gantt />
        </div>
        <Legend />
        <div className="h-[3px] shrink-0 bg-[#c8c8c8]" />
        <DetailTabs />
        <div className="flex h-[203px] shrink-0 flex-col">
          <ScheduledForm />
        </div>
        <StatusBar />
      </main>
    </div>
  );
}
